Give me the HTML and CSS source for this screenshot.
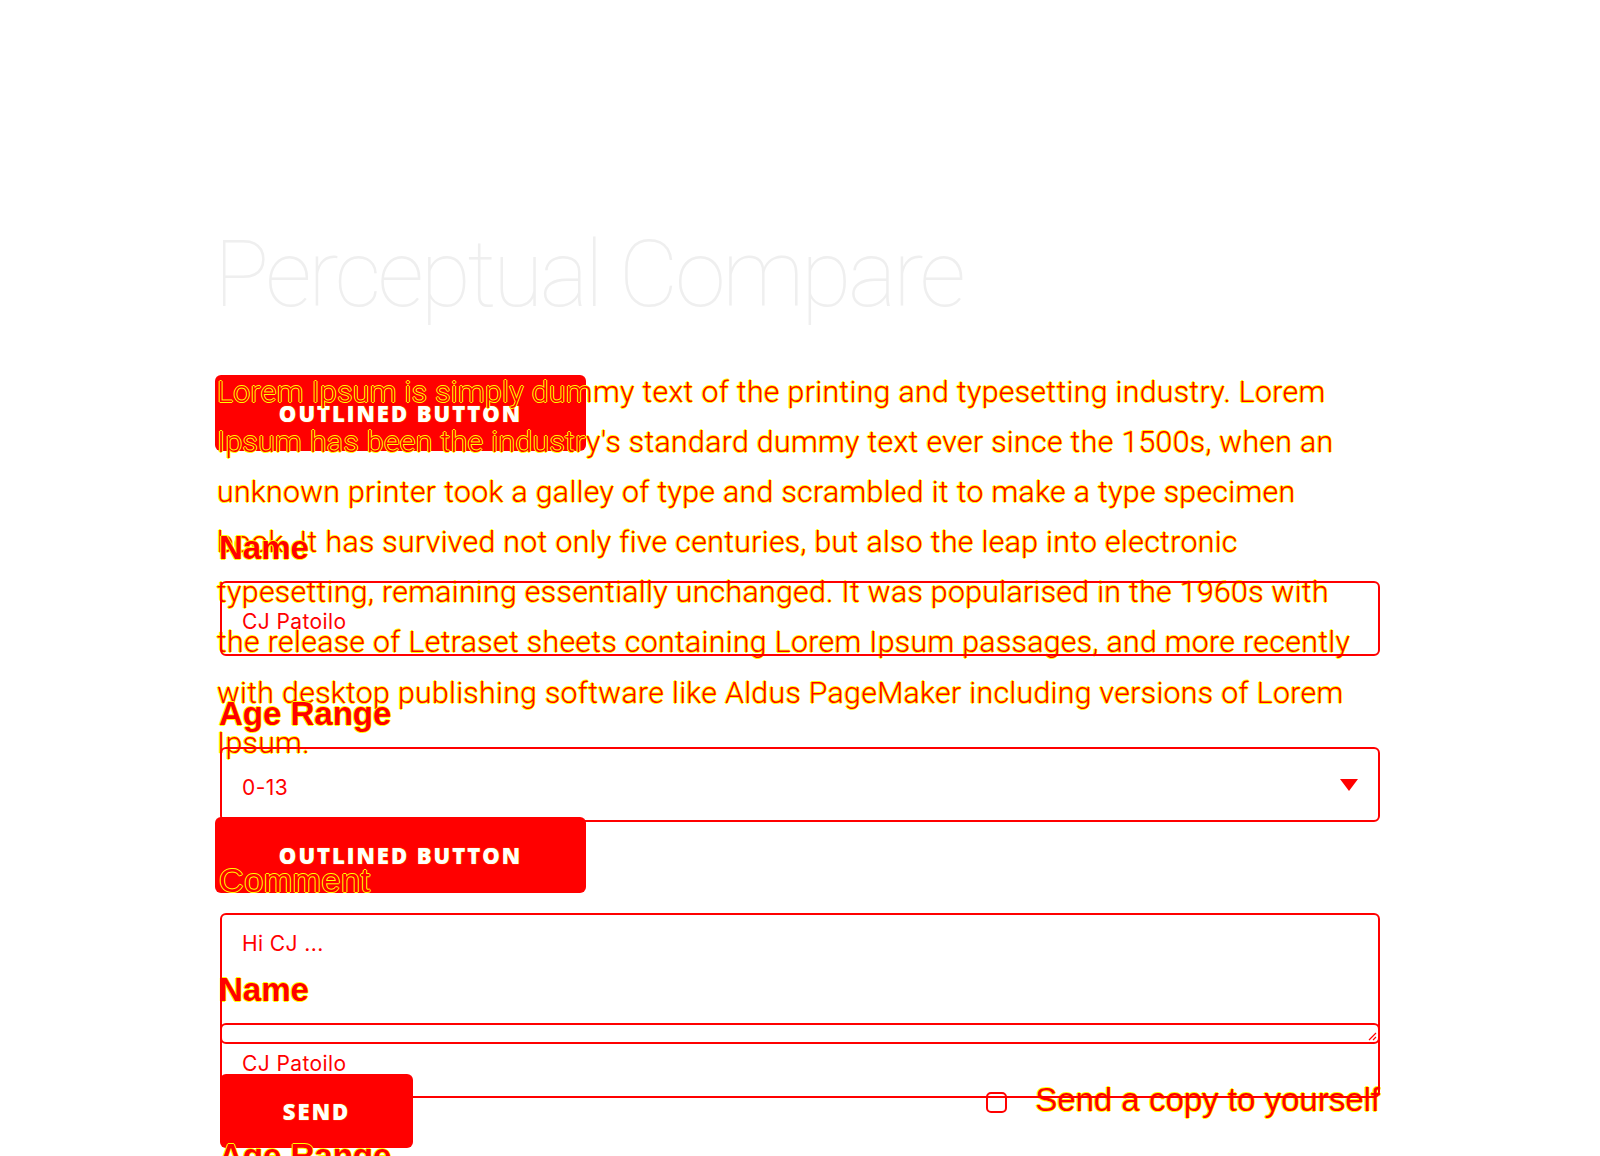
FILE: index.html
```html
<!DOCTYPE html>
<html lang="en">
<head>
<meta charset="utf-8">
<title>Perceptual Compare</title>
<link rel="stylesheet" href="styles.css">
</head>
<body>
<main class="page">
  <h1 class="title">Perceptual Compare</h1>
  <div class="stack">
    <section class="layer layer-y">
      <p class="lorem">Lorem Ipsum is simply dummy text of the printing and typesetting industry. Lorem<br>Ipsum has been the industry's standard dummy text ever since the 1500s, when an<br>unknown printer took a galley of type and scrambled it to make a type specimen<br>book. It has survived not only five centuries, but also the leap into electronic<br>typesetting, remaining essentially unchanged. It was popularised in the 1960s with<br>the release of Letraset sheets containing Lorem Ipsum passages, and more recently<br>with desktop publishing software like Aldus PageMaker including versions of Lorem<br>Ipsum.</p>
      <button class="btn btn-outlined" type="button">Outlined Button</button>
      <form class="form">
        <label class="label">Name</label>
        <input class="field" type="text" value="CJ Patoilo">
        <label class="label">Age Range</label>
      </form>
    </section>
    <section class="layer layer-x">
      <button class="btn btn-outlined" type="button">Outlined Button</button>
      <form class="form">
        <label class="label">Name</label>
        <input class="field" type="text" value="CJ Patoilo">
        <label class="label">Age Range</label>
        <div class="select-wrap">
          <select class="field select"><option>0-13</option></select>
          <svg class="caret" width="18" height="12" viewBox="0 0 18 12"><path d="M0 0H18L9 12Z" fill="#ff0000"/></svg>
        </div>
        <label class="label label-light">Comment</label>
        <div class="textarea-wrap">
          <textarea class="field textarea">Hi CJ ...</textarea>
          <svg class="grip" width="10" height="10" viewBox="0 0 10 10"><path d="M9 2L2 9M9 6L6 9" stroke="#ff0000" stroke-width="1.2"/></svg>
        </div>
        <div class="send-row">
          <button class="btn btn-send" type="button">Send</button>
          <label class="copy"><input class="check" type="checkbox"><span>Send a copy to yourself</span></label>
        </div>
      </form>
    </section>
  </div>
</main>
</body>
</html>
```

FILE: styles.css
```css
* { box-sizing: border-box; }

html { overflow: hidden; }

body {
  margin: 0;
  background: #ffffff;
  font-family: "Roboto", "Liberation Sans", sans-serif;
}

.page {
  width: 1160px;
  margin: 0 auto;
  padding-top: 229px;
}

.title {
  margin: 0 0 46px -6px;
  font-family: "Roboto", "Liberation Sans", sans-serif;
  font-weight: 100;
  font-size: 92px;
  line-height: 92px;
  letter-spacing: -3.5px;
  color: #efefef;
}

.stack { position: relative; }

.layer-x {
  position: absolute;
  top: 0;
  left: 0;
  right: 0;
}

.lorem,
.label,
.copy span {
  position: relative;
  z-index: 2;
  color: #ff0000;
  text-shadow: 1px 0 0 #ffff00, -1px 0 0 #ffff00, 0 1px 0 #ffff00, 0 -1px 0 #ffff00;
}

.lorem {
  margin: 0 0 0 -3px;
  font-family: "Roboto", "Liberation Sans", sans-serif;
  font-weight: 300;
  font-size: 30px;
  line-height: 50.1px;
  letter-spacing: 0.45px;
  white-space: nowrap;
}

.btn {
  position: relative;
  z-index: 1;
  display: flex;
  align-items: center;
  justify-content: center;
  margin-left: -5px;
  border: 0;
  border-radius: 6px;
  background: #ff0000;
  color: #ffffff;
  font-family: "Open Sans", "Liberation Sans", sans-serif;
  font-weight: 800;
  text-transform: uppercase;
  letter-spacing: 2px;
  text-shadow: 0 0 1px #ffff00;
}

.btn-outlined {
  width: 371px;
  height: 76px;
  font-size: 22px;
}

.layer-y .btn-outlined { margin-top: 49px; }
.layer-x .btn-outlined { margin-top: 8px; }

.form {
  display: flex;
  flex-direction: column;
  margin: 0;
}

.label {
  display: block;
  margin-top: 77px;
  margin-left: -1px;
  font-family: "Liberation Sans", "Arial", sans-serif;
  font-weight: 700;
  font-size: 33px;
  line-height: 40px;
}

.field + .label,
.select-wrap + .label { margin-top: 38px; }

.label-light {
  font-weight: 400;
  font-size: 34px;
  letter-spacing: 0.6px;
}

.field {
  position: relative;
  z-index: 3;
  display: block;
  width: 100%;
  height: 75px;
  margin-top: 13px;
  padding: 6px 20px 0;
  border: 2px solid #ff0000;
  border-radius: 6px;
  background: transparent;
  color: #ff0000;
  font-family: "Inter", "Roboto", "Liberation Sans", sans-serif;
  font-size: 21px;
  letter-spacing: 0.4px;
  outline: none;
}

.select-wrap,
.textarea-wrap {
  position: relative;
  margin-top: 13px;
}

.select-wrap .field,
.textarea-wrap .field { margin-top: 0; }

.select {
  height: 75px;
  appearance: none;
  -webkit-appearance: none;
}

.caret {
  position: absolute;
  z-index: 4;
  right: 22px;
  top: 32px;
}

.textarea {
  height: 131px;
  padding-top: 17px;
  line-height: 24px;
  resize: none;
}

.grip {
  position: absolute;
  z-index: 4;
  right: 3px;
  bottom: 3px;
}

.send-row {
  display: flex;
  align-items: center;
  justify-content: space-between;
  margin-top: 30px;
}

.btn-send {
  width: 193px;
  height: 74px;
  margin-left: 0;
  font-size: 22px;
}

.copy {
  display: flex;
  align-items: center;
  gap: 28px;
  margin-top: -22px;
}

.check {
  position: relative;
  z-index: 3;
  appearance: none;
  -webkit-appearance: none;
  width: 21px;
  height: 21px;
  margin: 4px 0 0 0;
  border: 2px solid #ff0000;
  border-radius: 5px;
  background: transparent;
}

.copy span {
  font-family: "Liberation Sans", "Arial", sans-serif;
  font-size: 33px;
  line-height: 40px;
}
```
